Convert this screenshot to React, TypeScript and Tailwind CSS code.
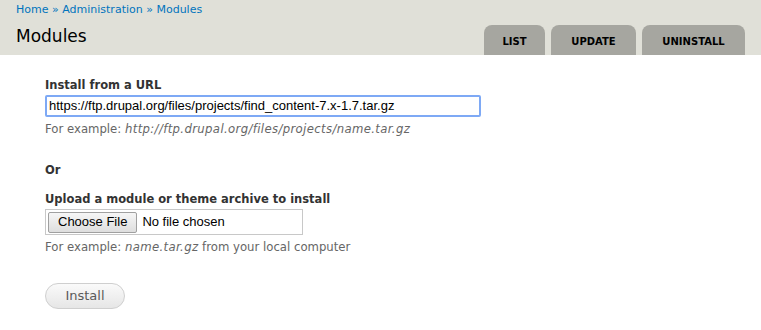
import React from "react";

const font = { fontFamily: '"DejaVu Sans", Verdana, sans-serif' };

export default function App() {
  return (
    <div className="w-[761px] h-[330px] bg-white overflow-hidden text-[#333]" style={font}>
      <div className="bg-[#e0e0d8] h-[55px] flex justify-between px-4">
        <div className="flex flex-col">
          <div className="pt-[3px] text-[11px] leading-[14px] text-[#0074bd]">
            Home » Administration » Modules
          </div>
          <h1 className="mt-[9px] text-[17px] leading-[20px] text-black font-normal">Modules</h1>
        </div>
        <div className="flex items-end gap-[6px]">
          <div className="h-[30px] w-[61px] rounded-t-[8px] bg-[#a6a6a0] flex items-center justify-center pt-[2px] text-[10px] font-bold text-black">LIST</div>
          <div className="h-[30px] w-[85px] rounded-t-[8px] bg-[#a6a6a0] flex items-center justify-center pt-[2px] text-[10px] font-bold text-black">UPDATE</div>
          <div className="h-[30px] w-[103px] rounded-t-[8px] bg-[#a6a6a0] flex items-center justify-center pt-[2px] text-[10px] font-bold text-black">UNINSTALL</div>
        </div>
      </div>
      <div className="pl-[45px] pt-[22px]">
        <div className="text-[11.5px] leading-[16px] font-bold text-[#333]">Install from a URL</div>
        <div className="mt-[2px] w-[436px] h-[22px] border-2 border-[#7ea9f5] rounded-[2px] flex items-center px-[2px] text-[13px] text-black" style={{ fontFamily: '"Liberation Sans", Arial, sans-serif' }}>
          https://ftp.drupal.org/files/projects/find_content-7.x-1.7.tar.gz
        </div>
        <div className="mt-[5px] text-[11.7px] leading-[14px] text-[#666]">
          For example: <em className="tracking-[0.35px]">http://ftp.drupal.org/files/projects/name.tar.gz</em>
        </div>
        <div className="mt-[26px] text-[11.5px] leading-[16px] font-bold">Or</div>
        <div className="mt-[13px] text-[11.5px] leading-[16px] font-bold">Upload a module or theme archive to install</div>
        <div className="mt-[2px] w-[258px] h-[26px] border border-[#c8c8c8] flex items-center text-[13px] text-black" style={{ fontFamily: '"Liberation Sans", Arial, sans-serif' }}>
          <div className="ml-[2px] h-[21px] px-[9px] border border-[#a0a0a0] rounded-[2px] bg-gradient-to-b from-[#f6f6f6] to-[#dedede] flex items-center">Choose File</div>
          <span className="ml-[5px]">No file chosen</span>
        </div>
        <div className="mt-[5px] text-[11.7px] leading-[14px] text-[#666]">
          For example: <em className="tracking-[0.35px]">name.tar.gz</em> from your local computer
        </div>
        <div className="mt-[29px] w-[80px] h-[26px] rounded-full border border-[#cfcfcf] bg-gradient-to-b from-[#fafafa] to-[#e6e6e6] flex items-center justify-center text-[13px] text-[#5a5a5a]">
          Install
        </div>
      </div>
    </div>
  );
}
